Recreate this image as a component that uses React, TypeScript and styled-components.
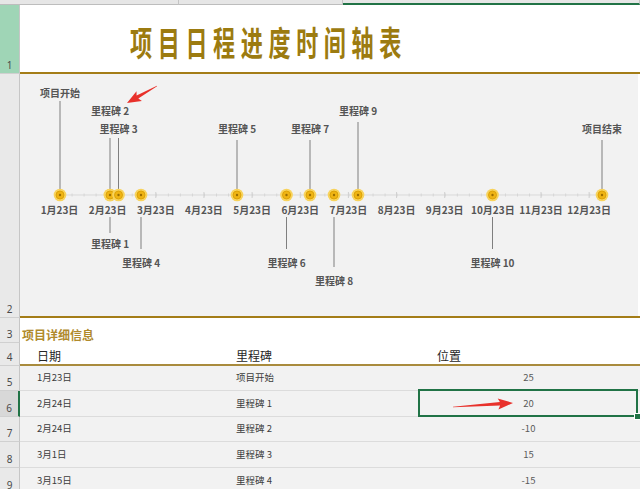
import React from 'react';
import styled, { createGlobalStyle } from 'styled-components';

const GlobalStyle = createGlobalStyle`
  html, body { margin: 0; padding: 0; background: #ffffff; }
  body { font-family: "Noto Sans CJK SC", "Noto Sans", sans-serif; }
  #root { width: 640px; height: 489px; }
`;

const GOLD = '#a47d17';

const Sheet = styled.div`
  position: relative;
  width: 640px;
  height: 489px;
  overflow: hidden;
  display: flex;
  flex-direction: column;
  background: #ffffff;
`;

const TopStrip = styled.div`
  display: grid;
  grid-template-columns: 179px 164px 1fr;
  height: 5px;
  flex: none;
`;

const StripCell = styled.div<{ $active?: boolean }>`
  box-sizing: border-box;
  background: #e6e6e6;
  border-right: 1px solid #c4c4c4;
  border-bottom: ${p => (p.$active ? '2px solid #217346' : '1px solid #bdbdbd')};
`;

const Row = styled.div<{ $h: number }>`
  display: grid;
  grid-template-columns: 20px 1fr;
  height: ${p => p.$h}px;
  flex: none;
`;

const RowHead = styled.div<{ $tone?: 'green' | 'selected' }>`
  box-sizing: border-box;
  display: flex;
  align-items: flex-end;
  justify-content: center;
  padding-bottom: 1px;
  font: 10px/14px "Noto Sans", "Liberation Sans", sans-serif;
  color: #4a4a4a;
  background: ${p => (p.$tone === 'green' ? '#9fd5b6' : p.$tone === 'selected' ? '#d8d8d8' : '#e9e9e9')};
  border-right: ${p => (p.$tone === 'selected' ? '2px solid #217346' : '1px solid #c6c6c6')};
  border-bottom: 1px solid #d0d0d0;
`;

const TitleCell = styled.div`
  box-sizing: border-box;
  display: flex;
  align-items: center;
  padding: 7px 0 0 110px;
  border-bottom: 2px solid ${GOLD};
  overflow: hidden;
`;

const TitleText = styled.span`
  display: inline-block;
  white-space: nowrap;
  font-family: "Noto Sans CJK SC", sans-serif;
  font-weight: 700;
  font-size: 34px;
  line-height: 1;
  letter-spacing: 8.6px;
  color: #9c7b10;
  transform: scaleX(0.65);
  transform-origin: left center;
`;

const ChartCell = styled.div`
  box-sizing: border-box;
  display: flex;
  padding-right: 2px;
  border-bottom: 2px solid ${GOLD};
`;

const ChartSvg = styled.svg`
  display: block;
  background: #f2f2f2;
  flex: 1;
  height: 242px;
`;

const SectionCell = styled.div`
  display: flex;
  align-items: flex-end;
  padding-left: 2px;
  font-size: 12px;
  line-height: 16px;
  font-weight: 700;
  color: #b08a2c;
`;

const Columns = styled.div<{ $head?: boolean; $last?: boolean }>`
  box-sizing: border-box;
  display: grid;
  grid-template-columns: 199px 200px 219px 1fr;
  background: ${p => (p.$head ? '#ffffff' : '#f2f2f2')};
  border-bottom: ${p => (p.$head ? '2px solid #a98b3d' : '1px solid #dcdcdc')};
`;

const HeadCell = styled.div<{ $pad: number }>`
  display: flex;
  align-items: flex-end;
  padding-left: ${p => p.$pad}px;
  font-size: 12px;
  line-height: 16px;
  color: #262626;
`;

const DataCell = styled.div<{ $center?: boolean; $selected?: boolean }>`
  position: relative;
  display: flex;
  align-items: center;
  justify-content: ${p => (p.$center ? 'center' : 'flex-start')};
  padding-left: ${p => (p.$center ? 0 : 17)}px;
  padding-bottom: 2px;
  font-size: 9.5px;
  color: ${p => (p.$center ? '#5a5a5a' : '#3c3c3c')};
  &::after {
    content: '';
    display: ${p => (p.$selected ? 'block' : 'none')};
    position: absolute;
    left: -1px;
    top: -2px;
    right: 0;
    bottom: -1px;
    border: 2px solid #217346;
  }
  &::before {
    content: '';
    display: ${p => (p.$selected ? 'block' : 'none')};
    position: absolute;
    right: -3px;
    bottom: -4px;
    width: 5px;
    height: 5px;
    background: #217346;
    border: 1px solid #ffffff;
    z-index: 2;
  }
`;

const Overlay = styled.svg`
  position: absolute;
  left: 0;
  top: 0;
  pointer-events: none;
`;

type Point = {
  x: number;
  label: string;
  ly: number;
  above: boolean;
  stemEnd: number;
};

const points: Point[] = [
  { x: 59, label: '项目开始', ly: 92, above: true, stemEnd: 101 },
  { x: 109, label: '里程碑 1', ly: 243, above: false, stemEnd: 233 },
  { x: 109, label: '里程碑 2', ly: 110, above: true, stemEnd: 138 },
  { x: 117.5, label: '里程碑 3', ly: 128, above: true, stemEnd: 138 },
  { x: 140, label: '里程碑 4', ly: 262, above: false, stemEnd: 249 },
  { x: 236, label: '里程碑 5', ly: 128, above: true, stemEnd: 140 },
  { x: 285.5, label: '里程碑 6', ly: 262, above: false, stemEnd: 249 },
  { x: 309, label: '里程碑 7', ly: 128, above: true, stemEnd: 140 },
  { x: 333, label: '里程碑 8', ly: 280, above: false, stemEnd: 267 },
  { x: 357, label: '里程碑 9', ly: 110, above: true, stemEnd: 122 },
  { x: 491.5, label: '里程碑 10', ly: 262, above: false, stemEnd: 249 },
  { x: 601, label: '项目结束', ly: 128, above: true, stemEnd: 140 },
];

const months = ['1月23日', '2月23日', '3月23日', '4月23日', '5月23日', '6月23日', '7月23日', '8月23日', '9月23日', '10月23日', '11月23日', '12月23日'];
const monthX = (i: number) => 58.5 + i * 48.15;
const AXIS_Y = 195;

const labelStyle: React.CSSProperties = {};

function Timeline() {
  const minor: number[] = [];
  for (let x = 59; x <= 601; x += 12.04) minor.push(x);
  return (
    <ChartSvg viewBox="0 0 616 242">
      <g transform="translate(-20,-74)">
        <line x1={59} y1={AXIS_Y} x2={601} y2={AXIS_Y} stroke="#d9d9d9" strokeWidth={1} />
        {minor.map((x, i) => (
          <line key={'m' + i} x1={x} y1={AXIS_Y - 1.5} x2={x} y2={AXIS_Y + 1.5} stroke="#d6d6d6" strokeWidth={1} />
        ))}
        {months.map((_, i) => (
          <line key={'t' + i} x1={monthX(i)} y1={AXIS_Y - 3} x2={monthX(i)} y2={AXIS_Y + 3} stroke="#d0d0d0" strokeWidth={1} />
        ))}
        {points.map((p, i) =>
          p.above ? (
            <line key={'s' + i} x1={p.x} y1={p.stemEnd} x2={p.x} y2={AXIS_Y} stroke="#7f7f7f" strokeWidth={1} />
          ) : (
            <line key={'s' + i} x1={p.x} y1={217} x2={p.x} y2={p.stemEnd} stroke="#7f7f7f" strokeWidth={1} />
          )
        )}
        {months.map((m, i) => (
          <text
            key={'l' + i}
            x={monthX(i)}
            y={209}
            textAnchor="middle"
            dominantBaseline="central"
            fontSize={10}
            fontWeight={700}
            fill="#555555"
            fontFamily='"Noto Sans CJK SC", sans-serif'
          >
            {m}
          </text>
        ))}
        {points.map((p, i) => (
          <g key={'c' + i}>
            <circle cx={p.x} cy={AXIS_Y} r={6.3} fill="#f8d35c" />
            <circle cx={p.x} cy={AXIS_Y} r={4} fill="#efb414" stroke="#d89d00" strokeWidth={0.8} />
            <circle cx={p.x} cy={AXIS_Y} r={1.2} fill="#9c6e00" />
          </g>
        ))}
        {points.map((p, i) => (
          <text
            key={'p' + i}
            x={p.x}
            y={p.ly}
            textAnchor="middle"
            dominantBaseline="central"
            fontSize={10}
            fontWeight={700}
            fill="#555555"
            fontFamily='"Noto Sans CJK SC", sans-serif'
            style={labelStyle}
          >
            {p.label}
          </text>
        ))}
      </g>
    </ChartSvg>
  );
}

function arrowPoints(x1: number, y1: number, x2: number, y2: number, head: number, hw: number, t0: number, t1: number) {
  const dx = x2 - x1;
  const dy = y2 - y1;
  const L = Math.hypot(dx, dy);
  const ux = dx / L;
  const uy = dy / L;
  const px = -uy;
  const py = ux;
  const bx = x2 - ux * head;
  const by = y2 - uy * head;
  const nx = bx - ux * 2;
  const ny = by - uy * 2;
  const pts = [
    [x1 + (px * t0) / 2, y1 + (py * t0) / 2],
    [bx + (px * t1) / 2, by + (py * t1) / 2],
    [nx + (px * hw) / 2, ny + (py * hw) / 2],
    [x2, y2],
    [nx - (px * hw) / 2, ny - (py * hw) / 2],
    [bx - (px * t1) / 2, by - (py * t1) / 2],
    [x1 - (px * t0) / 2, y1 - (py * t0) / 2],
  ];
  return pts.map(q => q.map(v => v.toFixed(1)).join(',')).join(' ');
}

type Item = { date: string; name: string; pos: string };
const rows: Item[] = [
  { date: '1月23日', name: '项目开始', pos: '25' },
  { date: '2月24日', name: '里程碑 1', pos: '20' },
  { date: '2月24日', name: '里程碑 2', pos: '-10' },
  { date: '3月1日', name: '里程碑 3', pos: '15' },
  { date: '3月15日', name: '里程碑 4', pos: '-15' },
];
const rowHeights = [25, 26, 25, 26, 26];

export default function App() {
  return (
    <>
      <GlobalStyle />
      <Sheet>
        <TopStrip>
          <StripCell />
          <StripCell />
          <StripCell $active />
        </TopStrip>
        <Row $h={69}>
          <RowHead $tone="green">1</RowHead>
          <TitleCell>
            <TitleText>项目日程进度时间轴表</TitleText>
          </TitleCell>
        </Row>
        <Row $h={244}>
          <RowHead>2</RowHead>
          <ChartCell>
            <Timeline />
          </ChartCell>
        </Row>
        <Row $h={25}>
          <RowHead>3</RowHead>
          <SectionCell>项目详细信息</SectionCell>
        </Row>
        <Row $h={23}>
          <RowHead>4</RowHead>
          <Columns $head>
            <HeadCell $pad={17}>日期</HeadCell>
            <HeadCell $pad={17}>里程碑</HeadCell>
            <HeadCell $pad={18}>位置</HeadCell>
            <div />
          </Columns>
        </Row>
        {rows.map((r, i) => (
          <Row key={i} $h={rowHeights[i]}>
            <RowHead $tone={i === 1 ? 'selected' : undefined}>{i + 5}</RowHead>
            <Columns>
              <DataCell>{r.date}</DataCell>
              <DataCell>{r.name}</DataCell>
              <DataCell $center $selected={i === 1}>{r.pos}</DataCell>
              <div />
            </Columns>
          </Row>
        ))}
        <Overlay width={640} height={489} viewBox="0 0 640 489">
          <polygon points={arrowPoints(157, 86, 127, 103, 12, 11, 0.6, 3.5)} fill="#e8312b" />
          <polygon points={arrowPoints(453, 407, 513, 403, 13, 11, 0.6, 3.5)} fill="#e8312b" />
        </Overlay>
      </Sheet>
    </>
  );
}
